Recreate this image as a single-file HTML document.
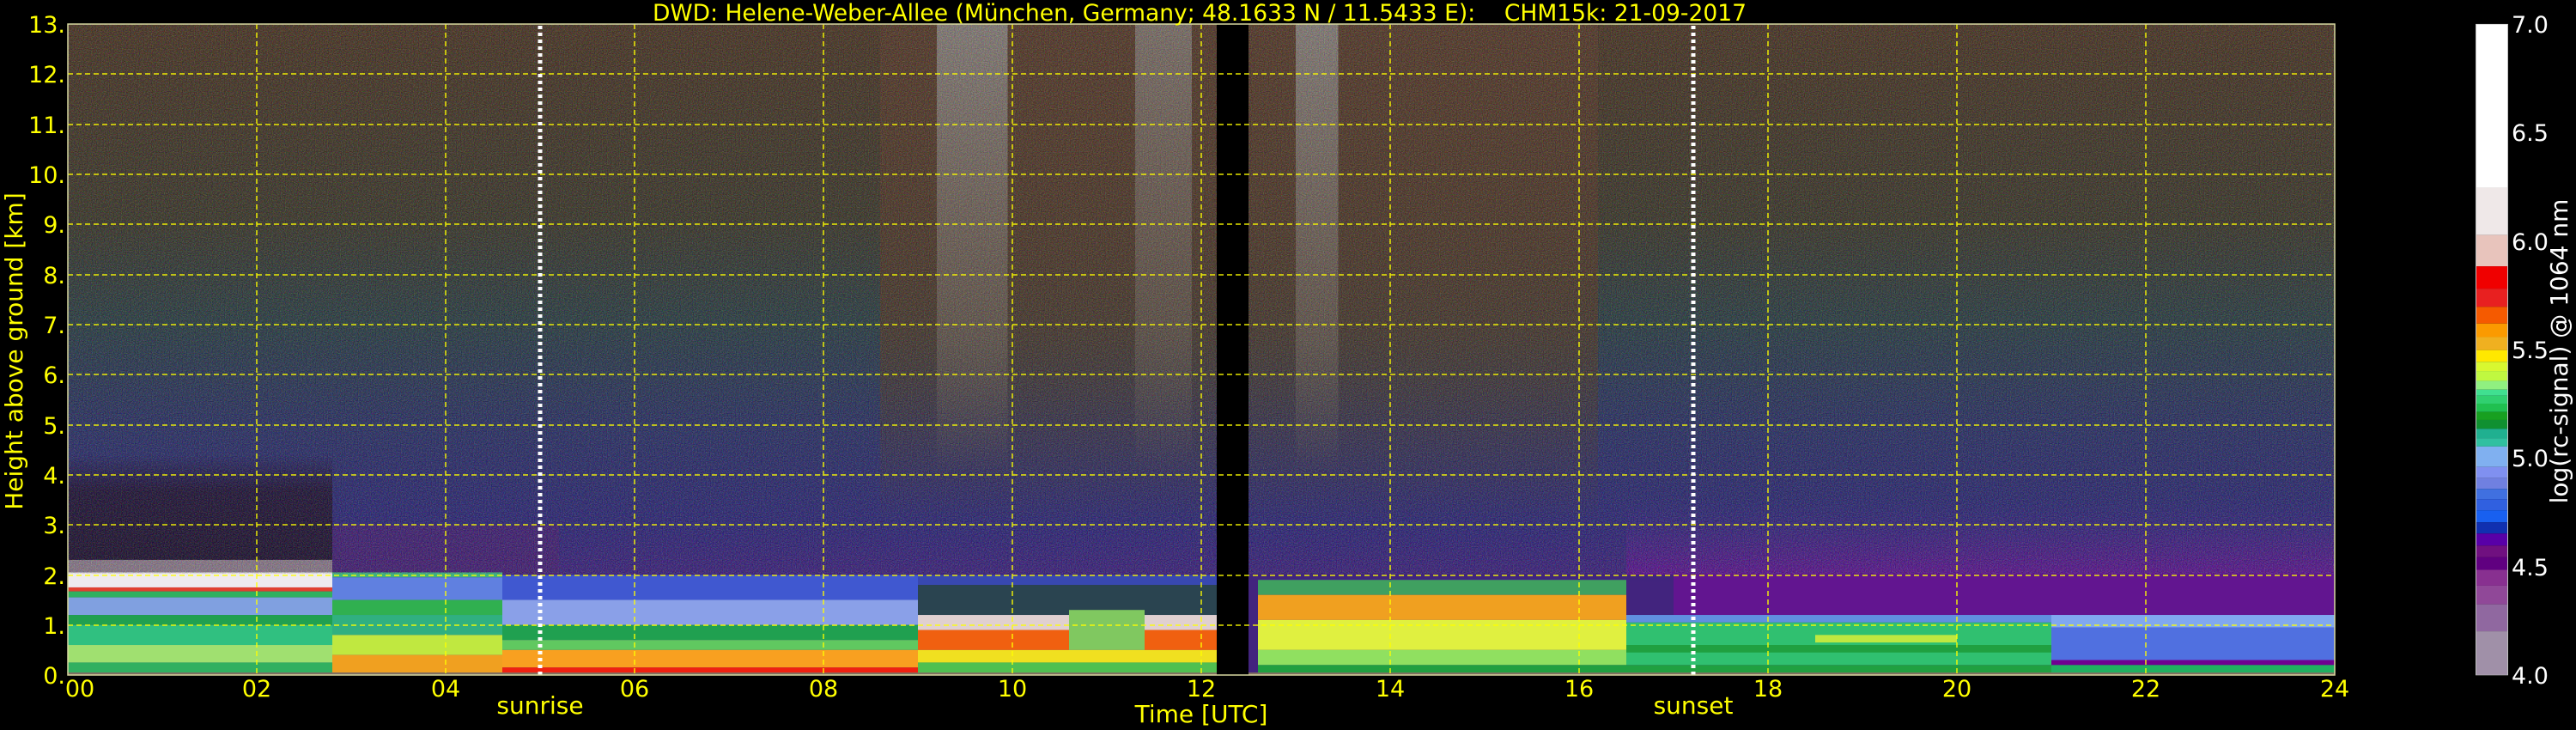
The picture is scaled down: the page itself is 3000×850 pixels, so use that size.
<!DOCTYPE html>
<html><head><meta charset="utf-8">
<style>
html,body{margin:0;padding:0;background:#000;}
body{width:3000px;height:850px;position:relative;overflow:hidden;font-family:"DejaVu Sans","Liberation Sans",sans-serif;}
svg{position:absolute;}
</style></head>
<body>
<svg style="left:79px;top:28px" width="2640" height="758" viewBox="0 0 24 13" preserveAspectRatio="none">
<defs>
<linearGradient id="bg" x1="0" y1="0" x2="0" y2="1">
<stop offset="0" stop-color="#4c3828"/>
<stop offset="0.3" stop-color="#3e3a2e"/>
<stop offset="0.46" stop-color="#2e4046"/>
<stop offset="0.62" stop-color="#2e3466"/>
<stop offset="0.77" stop-color="#302a78"/>
<stop offset="0.86" stop-color="#42247e"/>
<stop offset="1" stop-color="#42247e"/>
</linearGradient>
<linearGradient id="brown" x1="0" y1="0" x2="0" y2="1">
<stop offset="0" stop-color="#563c2c" stop-opacity="1"/>
<stop offset="0.6" stop-color="#503a2c" stop-opacity="0.8"/>
<stop offset="1" stop-color="#503a2c" stop-opacity="0"/>
</linearGradient>
<linearGradient id="streak" x1="0" y1="0" x2="0" y2="1">
<stop offset="0" stop-color="#8a8480" stop-opacity="0.9"/>
<stop offset="0.7" stop-color="#7a7068" stop-opacity="0.5"/>
<stop offset="1" stop-color="#7a7068" stop-opacity="0"/>
</linearGradient>
<linearGradient id="purp" x1="0" y1="0" x2="0" y2="1">
<stop offset="0" stop-color="#3a3080" stop-opacity="0"/>
<stop offset="1" stop-color="#5e1890"/>
</linearGradient>
<linearGradient id="dark" x1="0" y1="0" x2="0" y2="1">
<stop offset="0" stop-color="#24183a" stop-opacity="0"/>
<stop offset="0.3" stop-color="#24183a"/>
<stop offset="1" stop-color="#221632"/>
</linearGradient>
</defs>
<rect x="0" y="0" width="24" height="13" fill="url(#bg)"/>
<rect x="8.6" y="0" width="7.6" height="10" fill="url(#brown)"/>
<rect x="9.2" y="0" width="0.75" height="9" fill="url(#streak)"/>
<rect x="11.3" y="0" width="0.6" height="9" fill="url(#streak)" opacity="0.8"/>
<rect x="13.0" y="0" width="0.45" height="9" fill="url(#streak)"/>
<rect x="0" y="8.6" width="2.8" height="2.4" fill="url(#dark)"/>
<rect x="2.8" y="10" width="2.4" height="1" fill="#4a2272" opacity="0.7"/>
<rect x="16.5" y="9.5" width="7.5" height="1.5" fill="url(#purp)"/>
<rect x="17" y="11" width="7" height="0.85" fill="#621590"/>
<!-- A 0-2.8 -->
<rect x="0" y="10.7" width="2.8" height="0.25" fill="#8a7a8a"/>
<rect x="0" y="10.95" width="2.8" height="0.3" fill="#eeeaee"/>
<rect x="0" y="11.25" width="2.8" height="0.08" fill="#e04030"/>
<rect x="0" y="11.33" width="2.8" height="0.12" fill="#30b060"/>
<rect x="0" y="11.45" width="2.8" height="0.35" fill="#80a0e0"/>
<rect x="0" y="11.8" width="2.8" height="0.2" fill="#20a050"/>
<rect x="0" y="12.0" width="2.8" height="0.4" fill="#30c080"/>
<rect x="0" y="12.4" width="2.8" height="0.35" fill="#a0e070"/>
<rect x="0" y="12.75" width="2.8" height="0.2" fill="#30b060"/>
<!-- B 2.8-4.6 -->
<rect x="2.8" y="10.95" width="1.8" height="0.1" fill="#40b080"/>
<rect x="2.8" y="11.05" width="1.8" height="0.45" fill="#6080e0"/>
<rect x="2.8" y="11.5" width="1.8" height="0.3" fill="#30b050"/>
<rect x="2.8" y="11.8" width="1.8" height="0.4" fill="#30b080"/>
<rect x="2.8" y="12.2" width="1.8" height="0.4" fill="#c0e840"/>
<rect x="2.8" y="12.6" width="1.8" height="0.35" fill="#f0a020"/>
<!-- C 4.6-9 -->
<rect x="4.6" y="11.0" width="4.4" height="0.5" fill="#4058d0"/>
<rect x="4.6" y="11.5" width="4.4" height="0.5" fill="#8aa0e8"/>
<rect x="4.6" y="12.0" width="4.4" height="0.3" fill="#20a050"/>
<rect x="4.6" y="12.3" width="4.4" height="0.2" fill="#60c860"/>
<rect x="4.6" y="12.5" width="4.4" height="0.35" fill="#f8a020"/>
<rect x="4.6" y="12.85" width="4.4" height="0.12" fill="#f02010"/>
<!-- D 9-12.2 -->
<rect x="9" y="11.0" width="3.2" height="0.2" fill="#3848b0"/>
<rect x="9" y="11.2" width="3.2" height="0.6" fill="#2a4450"/>
<rect x="9" y="11.8" width="3.2" height="0.3" fill="#e0d0d0"/>
<rect x="9" y="12.1" width="3.2" height="0.4" fill="#f06010"/>
<rect x="9" y="12.5" width="3.2" height="0.25" fill="#f0e020"/>
<rect x="9" y="12.75" width="3.2" height="0.22" fill="#50c050"/>
<rect x="10.6" y="11.7" width="0.8" height="0.8" fill="#80c860"/>
<!-- E 12.6-16.5 -->
<rect x="12.6" y="11.1" width="3.9" height="0.3" fill="#40a060"/>
<rect x="12.6" y="11.4" width="3.9" height="0.5" fill="#f0a020"/>
<rect x="12.6" y="11.9" width="3.9" height="0.6" fill="#e0f040"/>
<rect x="12.6" y="12.5" width="3.9" height="0.3" fill="#90e060"/>
<rect x="12.6" y="12.8" width="3.9" height="0.17" fill="#20a040"/>
<!-- F 16.5-21 -->
<rect x="16.5" y="11.8" width="4.5" height="0.15" fill="#6090e0"/>
<rect x="16.5" y="11.95" width="4.5" height="0.85" fill="#30c070"/>
<rect x="16.5" y="12.4" width="4.5" height="0.15" fill="#20a040"/>
<rect x="18.5" y="12.2" width="1.5" height="0.15" fill="#c0e840"/>
<rect x="16.5" y="12.8" width="4.5" height="0.17" fill="#20a040"/>
<!-- G 21-24 -->
<rect x="21" y="11.8" width="3" height="0.25" fill="#80a8f0"/>
<rect x="21" y="12.05" width="3" height="0.65" fill="#5070e0"/>
<rect x="21" y="12.7" width="3" height="0.1" fill="#700090"/>
<rect x="21" y="12.8" width="3" height="0.17" fill="#20b060"/>
<rect x="0" y="12.95" width="24" height="0.05" fill="#807060"/>
</svg>

<svg style="left:0;top:0" width="3000" height="850" viewBox="0 0 3000 850">
<defs>
<filter id="n" x="0" y="0" width="100%" height="100%">
<feTurbulence type="fractalNoise" baseFrequency="0.8" numOctaves="1" seed="3"/>
<feColorMatrix values="4 0 0 0 -1.8  0 4 0 0 -1.8  0 0 4 0 -1.8  0 0 0 0 1"/>
</filter>
</defs>
<rect x="79" y="28" width="2640" height="640" filter="url(#n)" opacity="0.15"/>
<rect x="1417" y="28" width="37" height="758" fill="#000"/>
<g stroke="#ffff00" stroke-width="1.5" stroke-dasharray="6,4" fill="none" opacity="0.9">
<path d="M79 728H2719M79 670H2719M79 611H2719M79 553H2719M79 495H2719M79 436H2719M79 378H2719M79 320H2719M79 261H2719M79 203H2719M79 145H2719M79 86H2719"/>
<path d="M299 28V786M519 28V786M739 28V786M959 28V786M1179 28V786M1399 28V786M1619 28V786M1839 28V786M2059 28V786M2279 28V786M2499 28V786"/>
</g>
<g stroke="#ffffff" stroke-width="5" stroke-dasharray="4,4">
<path d="M629 30V786M1972 30V786"/>
</g>
<rect x="79" y="28" width="2640" height="758" fill="none" stroke="#d8d8a0" stroke-width="1.5"/>
<g fill="#ffff00" font-size="27" font-family="DejaVu Sans, Liberation Sans, sans-serif">
<text x="1397" y="24" text-anchor="middle" textLength="1274" lengthAdjust="spacingAndGlyphs" xml:space="preserve">DWD: Helene-Weber-Allee (München, Germany; 48.1633 N / 11.5433 E):&#160;&#160;&#160;&#160;CHM15k: 21-09-2017</text>
<g text-anchor="end">
<text x="76" y="38">13.</text><text x="76" y="96">12.</text><text x="76" y="155">11.</text><text x="76" y="213">10.</text>
<text x="76" y="271">9.</text><text x="76" y="330">8.</text><text x="76" y="388">7.</text><text x="76" y="446">6.</text>
<text x="76" y="505">5.</text><text x="76" y="563">4.</text><text x="76" y="621">3.</text><text x="76" y="680">2.</text>
<text x="76" y="738">1.</text><text x="76" y="796">0.</text>
</g>
<g text-anchor="middle">
<text x="93" y="811">00</text><text x="299" y="811">02</text><text x="519" y="811">04</text><text x="739" y="811">06</text>
<text x="959" y="811">08</text><text x="1179" y="811">10</text><text x="1399" y="811">12</text><text x="1619" y="811">14</text>
<text x="1839" y="811">16</text><text x="2059" y="811">18</text><text x="2279" y="811">20</text><text x="2499" y="811">22</text><text x="2719" y="811">24</text>
<text x="629" y="831" font-size="28">sunrise</text>
<text x="1972" y="831" font-size="28">sunset</text>
<text x="1399" y="841" font-size="28">Time [UTC]</text>
</g>
<text transform="translate(26,409) rotate(-90)" text-anchor="middle" font-size="28">Height above ground [km]</text>
</g>
<g fill="#ffffff" font-size="27" font-family="DejaVu Sans, Liberation Sans, sans-serif">
<text x="2925" y="38">7.0</text><text x="2925" y="164">6.5</text><text x="2925" y="291">6.0</text>
<text x="2925" y="417">5.5</text><text x="2925" y="543">5.0</text><text x="2925" y="670">4.5</text><text x="2925" y="796">4.0</text>
<text transform="translate(2990,409) rotate(-90)" text-anchor="middle" font-size="28">log(rc-signal) @ 1064 nm</text>
</g>
</svg>

<svg style="left:2883px;top:0" width="38" height="850" viewBox="0 0 38 1568" preserveAspectRatio="none">
<rect x="0" y="52" width="38" height="351" fill="#ffffff"/>
<rect x="0" y="403" width="38" height="102" fill="#efe8e8"/>
<rect x="0" y="505" width="38" height="67" fill="#e8c4bc"/>
<rect x="0" y="572" width="38" height="48" fill="#f00000"/>
<rect x="0" y="620" width="38" height="39" fill="#e82020"/>
<rect x="0" y="659" width="38" height="36" fill="#f55a00"/>
<rect x="0" y="695" width="38" height="29" fill="#fb9a00"/>
<rect x="0" y="724" width="38" height="28" fill="#f0b020"/>
<rect x="0" y="752" width="38" height="25" fill="#ffe800"/>
<rect x="0" y="777" width="38" height="20" fill="#d8f830"/>
<rect x="0" y="797" width="38" height="21" fill="#c0f840"/>
<rect x="0" y="818" width="38" height="19" fill="#90f080"/>
<rect x="0" y="837" width="38" height="13" fill="#40e090"/>
<rect x="0" y="850" width="38" height="17" fill="#30d070"/>
<rect x="0" y="867" width="38" height="18" fill="#20c050"/>
<rect x="0" y="885" width="38" height="17" fill="#18a020"/>
<rect x="0" y="902" width="38" height="19" fill="#109030"/>
<rect x="0" y="921" width="38" height="20" fill="#20b090"/>
<rect x="0" y="941" width="38" height="18" fill="#30c0a0"/>
<rect x="0" y="959" width="38" height="44" fill="#80b0f0"/>
<rect x="0" y="1003" width="38" height="24" fill="#8090f0"/>
<rect x="0" y="1027" width="38" height="23" fill="#7080e0"/>
<rect x="0" y="1050" width="38" height="22" fill="#4070e0"/>
<rect x="0" y="1072" width="38" height="24" fill="#3060e0"/>
<rect x="0" y="1096" width="38" height="26" fill="#1860f0"/>
<rect x="0" y="1122" width="38" height="24" fill="#1030b0"/>
<rect x="0" y="1146" width="38" height="26" fill="#5800a8"/>
<rect x="0" y="1172" width="38" height="25" fill="#701080"/>
<rect x="0" y="1197" width="38" height="27" fill="#600080"/>
<rect x="0" y="1224" width="38" height="34" fill="#883090"/>
<rect x="0" y="1258" width="38" height="40" fill="#904898"/>
<rect x="0" y="1298" width="38" height="58" fill="#9068a0"/>
<rect x="0" y="1356" width="38" height="94" fill="#a090a8"/>
<rect x="0.5" y="52" width="37" height="1398" fill="none" stroke="#c0c0c0" stroke-width="1"/>
</svg>
</body></html>
